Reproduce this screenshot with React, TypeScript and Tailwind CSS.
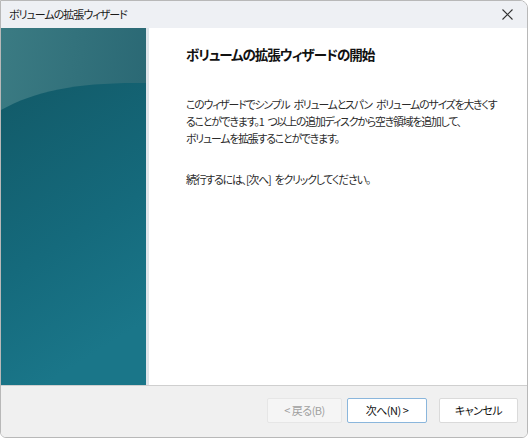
import React from 'react'

const jp = {
  fontFamily: '"Noto Sans CJK JP", "Noto Sans", sans-serif',
  fontFeatureSettings: '"palt"',
}

const Sp = () => <span className="inline-block w-[4px]" />

function SidePanel() {
  return (
    <div className="w-[145px] shrink-0 h-full relative overflow-hidden">
      <svg width="145" height="357" viewBox="0 0 145 357" preserveAspectRatio="none" className="block">
        <defs>
          <linearGradient id="top" x1="0" y1="0" x2="1" y2="0.3">
            <stop offset="0" stopColor="#3b7b83" />
            <stop offset="1" stopColor="#2a6874" />
          </linearGradient>
          <linearGradient id="body" x1="0" y1="0" x2="0.3" y2="1">
            <stop offset="0" stopColor="#125a68" />
            <stop offset="0.6" stopColor="#156a7c" />
            <stop offset="1" stopColor="#1a7689" />
          </linearGradient>
        </defs>
        <rect width="145" height="357" fill="url(#top)" />
        <path d="M0 82 C 35 62, 80 54, 145 55 L145 357 L0 357 Z" fill="url(#body)" />
      </svg>
    </div>
  )
}

export default function App() {
  return (
    <div className="w-[530px] h-[439px] bg-white" style={jp}>
      <div className="w-[528px] h-[438px] flex flex-col border border-[#b8b8b8] rounded-tr-[8px] rounded-br-[6px] rounded-bl-[6px] overflow-hidden bg-white">
        <div className="h-[27px] flex items-center justify-between bg-[#eef0f4] pl-[8px] pr-[14px]">
          <span className="text-[11px] tracking-[-1px] text-[#1a1a1a]">ボリュームの拡張ウィザード</span>
          <svg width="11" height="11" viewBox="0 0 11 11">
            <path d="M0.5 0.5 L10.5 10.5 M10.5 0.5 L0.5 10.5" stroke="#333" strokeWidth="1.1" />
          </svg>
        </div>
        <div className="h-[357px] flex">
          <SidePanel />
          <div className="w-[3px] shrink-0 bg-[#dfe5ea]" />
          <div className="flex-1 bg-white pl-[37px] pr-[10px] pt-[16px] whitespace-nowrap text-[#2a2a2a]">
            <h1 className="text-[13.5px] font-bold tracking-[-1px] text-[#111] leading-[20px]">ボリュームの拡張ウィザードの開始</h1>
            <p className="mt-[32px] text-[10.8px] tracking-[-1.1px] leading-[17px]">
              このウィザードでシンプル<Sp />ボリュームとスパン<Sp />ボリュームのサイズを大きくす
              <br />
              ることができます。1<Sp />つ以上の追加ディスクから空き領域を追加して、
              <br />
              ボリュームを拡張することができます。
            </p>
            <p className="mt-[24px] text-[10.8px] tracking-[-1.1px] leading-[17px]">
              続行するには、[次へ]<Sp />をクリックしてください。
            </p>
          </div>
        </div>
        <div className="flex-1 bg-[#f0f0f0] border-t border-[#cfcfcf] flex items-center justify-end pr-[9px] pb-[3px]">
          <button className="w-[75px] h-[25px] text-[11px] tracking-[-0.5px] text-[#a0a0a0] bg-[#f5f5f5] border border-[#e6e6e6] rounded-[2px]">
            &lt; 戻る(B)
          </button>
          <button className="ml-[5px] w-[80px] h-[25px] text-[11px] tracking-[-0.5px] text-[#111] bg-white border border-[#8ab6dc] rounded-[2px]">
            次へ(N) &gt;
          </button>
          <button className="ml-[12px] w-[79px] h-[25px] text-[11px] tracking-[-0.5px] text-[#111] bg-white border border-[#dadada] rounded-[2px]">
            キャンセル
          </button>
        </div>
      </div>
    </div>
  )
}
